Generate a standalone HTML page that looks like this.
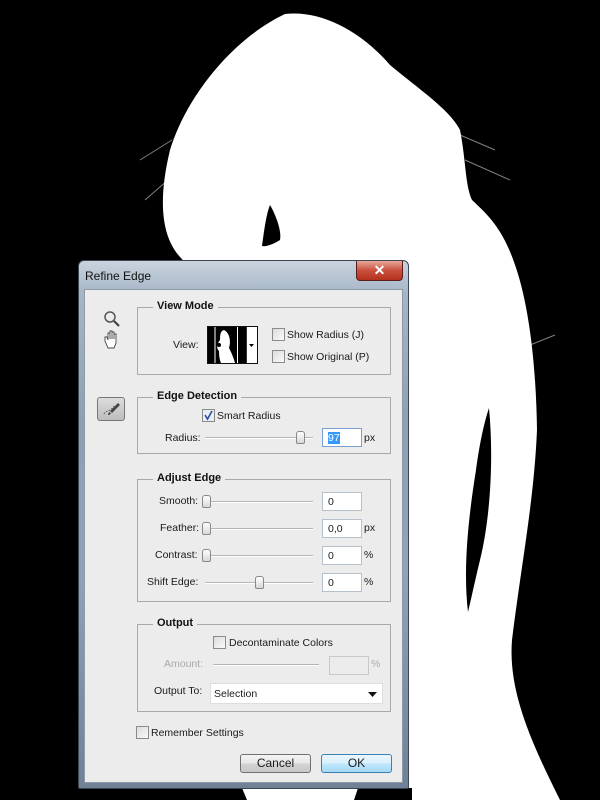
<!DOCTYPE html>
<html><head><meta charset="utf-8"><style>
*{margin:0;padding:0;box-sizing:border-box}
body{width:600px;height:800px;background:#000;position:relative;overflow:hidden;font-family:"Liberation Sans",sans-serif;font-size:10.5px;color:#1a1a1a}
.a{position:absolute}
#dlg{left:78px;top:260px;width:331px;height:529px;border:1px solid #3c4654;border-radius:6px 6px 2px 2px;background:linear-gradient(180deg,#c9d3de 0,#a7b6c6 6%,#8ea0b4 30%,#8fa2b8 60%,#6f8196 100%)}
#title{left:6px;top:8px;font-size:12px;color:#111}
#close{left:277px;top:0;width:47px;height:20px;border:1px solid #5a1f1a;border-top:none;border-radius:0 0 4px 4px;background:linear-gradient(180deg,#e9a89a,#c9503d 50%,#b4311d);color:#fff;font-weight:bold;font-size:14px;text-align:center;line-height:19px}
#panel{left:5px;top:28px;width:319px;height:494px;background:#ececec;border:1px solid #8f9aa6}
.grp{position:absolute;border:1px solid #a9a9a9}
.gt{position:absolute;background:#ececec;font-weight:bold;font-size:11px;padding:0 4px;color:#111;top:-8px;left:15px}
.cb{position:absolute;width:13px;height:13px;border:1px solid #8b8b8b;background:linear-gradient(135deg,#dcdcdc,#fafafa)}
.lbl{position:absolute;white-space:nowrap}
.sl{position:absolute;height:2px;border-top:1px solid #b6b6b6;border-bottom:1px solid #fff}
.th{position:absolute;width:9px;height:13px;border:1px solid #888;border-radius:3px 3px 2px 2px;background:linear-gradient(#fff,#d8d8d8)}
.in{position:absolute;width:40px;height:19px;border:1px solid #b6c1cc;background:#fff;padding:3px 0 0 5px}
.btn{position:absolute;width:71px;height:19px;border:1px solid #707070;border-radius:3px;background:linear-gradient(#f4f4f4 0,#e6e6e6 50%,#d3d3d3 51%,#c8c8c8);text-align:center;font-size:12px;line-height:17px}
</style></head><body>
<svg class="a" style="left:0;top:0" width="600" height="800">
<path fill="#fff" d="M185 262 C160 240 158 200 170 150 C185 100 230 40 285 14 C320 10 360 30 390 65 C420 90 450 110 460 130 C466 160 465 185 472 200 C488 215 502 228 514 262 C528 300 536 360 537 430 C534 500 522 560 512 640 C508 690 530 740 560 800 L412 800 L412 788 L358 788 L354 800 L247 800 L242 788 L185 788 Z"/>
<path fill="#000" d="M489 408 C494 460 490 520 480 560 C474 585 471 600 468 612 C463 570 468 520 476 470 C480 440 485 420 489 408 Z"/>
<path fill="#000" d="M270 205 C276 215 282 232 280 240 C274 244 266 247 262 246 C264 232 266 215 270 205 Z"/>
<g stroke="#fff" stroke-width="1" opacity=".5" fill="none">
<path d="M172 140 L140 160 M168 180 L145 200 M460 135 L495 150 M465 160 L510 180 M530 345 L555 335"/>
</g>
</svg>
<div id="dlg" class="a">
<div id="title" class="a">Refine Edge</div>
<div id="close" class="a">✕</div>
<div id="panel" class="a">
<svg class="a" style="left:17px;top:20px" width="24" height="42">
<circle cx="8" cy="7" r="5" fill="none" stroke="#555" stroke-width="1.5"/><path d="M12 11 L17 16" stroke="#444" stroke-width="2.2"/>
<path d="M6 38 L3 31 L3 27 L5 27 L6 30 L6 23 L8 23 L8 29 L8 21 L10 21 L10 29 L10 22 L12 22 L12 29 L12 24 L14 24 L14 33 L12 38 Z" fill="#fff" stroke="#444" stroke-width=".9"/>
</svg>
<div class="a" style="left:12px;top:107px;width:28px;height:24px;border:1px solid #777;border-radius:3px;background:linear-gradient(#dcdcdc,#bdbdbd)">
<svg width="26" height="22"><path d="M6 16 C8 12 12 14 16 8" stroke="#555" fill="none" stroke-dasharray="1.5 1.5"/><path d="M12 13 L20 5 L22 7 L14 15 Z" fill="#444"/><path d="M11 14 L13 16 L10 17 Z" fill="#222"/></svg>
</div>
<div class="grp" style="left:52px;top:17px;width:254px;height:68px"><div class="gt">View Mode</div>
<div class="lbl" style="left:35px;top:31px">View:</div>
<div class="a" style="left:69px;top:18px;width:51px;height:38px;border:1px solid #111;background:#000">
<svg width="49" height="36"><path d="M16 3 C12 4 12 9 12 13 C9 17 8 21 11 24 C11 30 12 34 13 36 L27 36 C25 29 23 25 21 21 C23 15 22 6 16 3 Z" fill="#fff"/><circle cx="11" cy="18" r="2" fill="#000"/><line x1="7" y1="0" x2="7" y2="36" stroke="#fff" stroke-width="1"/><line x1="29.5" y1="0" x2="29.5" y2="36" stroke="#fff" stroke-width="1"/><rect x="38" y="0" width="11" height="36" fill="#fff"/><line x1="38.5" y1="0" x2="38.5" y2="36" stroke="#333"/><path d="M41 17 L46 17 L43.5 20 Z" fill="#000"/></svg>
</div>
<div class="cb" style="left:134px;top:20px"></div><div class="lbl" style="left:149px;top:21px">Show Radius (J)</div>
<div class="cb" style="left:134px;top:42px"></div><div class="lbl" style="left:149px;top:43px">Show Original (P)</div>
</div>
<div class="grp" style="left:52px;top:107px;width:254px;height:57px"><div class="gt">Edge Detection</div>
<div class="cb" style="left:64px;top:11px;background:#e8eef6"><svg width="11" height="11" style="position:absolute;left:0;top:0"><path d="M2 5 L4.5 9 L9 1" stroke="#2a4da0" stroke-width="1.6" fill="none"/></svg></div>
<div class="lbl" style="left:79px;top:12px">Smart Radius</div>
<div class="lbl" style="left:27px;top:34px">Radius:</div>
<div class="sl" style="left:67px;top:39px;width:108px"></div><div class="th" style="left:158px;top:33px"></div>
<div class="in" style="left:184px;top:30px;border-color:#7aa0d0"><span style="background:#3399ff;color:#fff">97</span></div>
<div class="lbl" style="left:226px;top:34px">px</div>
</div>
<div class="grp" style="left:52px;top:189px;width:254px;height:123px"><div class="gt">Adjust Edge</div>
<div class="lbl" style="left:21px;top:15px">Smooth:</div><div class="sl" style="left:67px;top:21px;width:108px"></div><div class="th" style="left:64px;top:15px"></div><div class="in" style="left:184px;top:12px">0</div>
<div class="lbl" style="left:22px;top:42px">Feather:</div><div class="sl" style="left:67px;top:48px;width:108px"></div><div class="th" style="left:64px;top:42px"></div><div class="in" style="left:184px;top:39px">0,0</div><div class="lbl" style="left:226px;top:42px">px</div>
<div class="lbl" style="left:17px;top:69px">Contrast:</div><div class="sl" style="left:67px;top:75px;width:108px"></div><div class="th" style="left:64px;top:69px"></div><div class="in" style="left:184px;top:66px">0</div><div class="lbl" style="left:226px;top:69px">%</div>
<div class="lbl" style="left:9px;top:96px">Shift Edge:</div><div class="sl" style="left:67px;top:102px;width:108px"></div><div class="th" style="left:117px;top:96px"></div><div class="in" style="left:184px;top:93px">0</div><div class="lbl" style="left:226px;top:96px">%</div>
</div>
<div class="grp" style="left:52px;top:334px;width:254px;height:88px"><div class="gt">Output</div>
<div class="cb" style="left:75px;top:11px"></div><div class="lbl" style="left:91px;top:12px">Decontaminate Colors</div>
<div class="lbl" style="left:26px;top:33px;color:#aaa">Amount:</div><div class="sl" style="left:75px;top:39px;width:106px"></div><div class="in" style="left:191px;top:31px;border-color:#c8c8c8;background:#ececec"></div><div class="lbl" style="left:233px;top:33px;color:#aaa">%</div>
<div class="lbl" style="left:16px;top:60px">Output To:</div>
<div class="a" style="left:72px;top:58px;width:173px;height:21px;background:#fff;border:1px solid #ddd;padding:4px 0 0 3px">Selection<svg class="a" style="right:5px;top:8px" width="9" height="5"><path d="M0 0 L9 0 L4.5 5 Z" fill="#111"/></svg></div>
</div>
<div class="cb" style="left:51px;top:436px"></div><div class="lbl" style="left:66px;top:437px">Remember Settings</div>
<div class="btn" style="left:155px;top:464px">Cancel</div>
<div class="btn" style="left:236px;top:464px;border-color:#3c7fb1;background:linear-gradient(#eaf6fd 0,#d9f0fc 50%,#bee6fd 51%,#a7d9f5)">OK</div>
</div>
</div>
</body></html>
